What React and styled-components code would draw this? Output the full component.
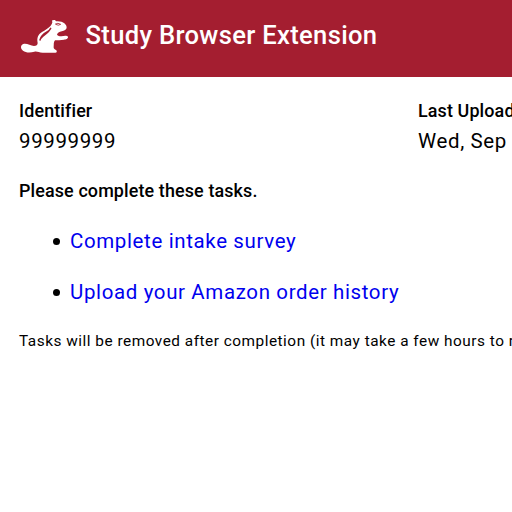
import React from "react";
import styled, { createGlobalStyle } from "styled-components";

const GlobalStyle = createGlobalStyle`
  * { box-sizing: border-box; }
  html, body { margin: 0; background: #fff; overflow: hidden; }
  body { font-family: Roboto, "Liberation Sans", sans-serif; color: #000; }
`;

const Page = styled.div`
  width: 512px;
  height: 512px;
  overflow: hidden;
`;

const AppBar = styled.header`
  display: flex;
  align-items: flex-start;
  height: 77px;
  padding: 10px 0 0 12px;
  gap: 7.5px;
  background: #a41e30;
  color: #fff;
`;

const Logo = styled.svg`
  width: 66px;
  height: 54px;
  flex: none;
`;

const Title = styled.h1`
  margin: 0;
  padding-top: 5px;
  font-size: 25.6px;
  font-weight: 500;
  line-height: 40px;
  letter-spacing: 0.0125em;
  white-space: nowrap;
`;

const Content = styled.main`
  padding: 20px 0 0 19px;
`;

const Summary = styled.section`
  display: grid;
  grid-template-columns: 399px 399px;
`;

const Heading = styled.h2`
  margin: 0;
  font-size: 17.92px;
  font-weight: 500;
  line-height: 28px;
  letter-spacing: 0.0071em;
  white-space: nowrap;
`;

const Value = styled.div`
  padding-top: 1px;
  font-size: 20.48px;
  line-height: 31px;
  letter-spacing: 0.03125em;
  white-space: nowrap;
`;

const Tasks = styled.section`
  padding-top: 20px;
`;

const TaskList = styled.ul`
  display: flex;
  flex-direction: column;
  gap: 20px;
  margin: 21px 0 20px;
  padding: 0 0 0 51px;
  font-size: 20.48px;
  line-height: 31px;
  letter-spacing: 0.03125em;
  list-style: none;
`;

const Task = styled.li`
  display: flex;
  align-items: center;

  &::before {
    content: "";
    width: 7px;
    height: 7px;
    margin: 0 10.5px 0 -17.5px;
    border-radius: 50%;
    background: #000;
  }
`;

const TaskLink = styled.a`
  color: #0000ee;
  text-decoration: none;
  white-space: nowrap;
`;

const Caption = styled.p`
  margin: 0;
  font-size: 15.36px;
  line-height: 26px;
  letter-spacing: 0.0333em;
  white-space: nowrap;
`;

const tasks = ["Complete intake survey", "Upload your Amazon order history"];

function Chipmunk() {
  return (
    <Logo viewBox="0 0 198 162" aria-hidden="true">
      <path
        fill="#fff"
        d="M121 37 C119 31 122 29 125 31 C128 28 131 31 132 34 C142 33 152 35 157 40 C162 45 166 50 163 56 C159 62 151 63 144 65 C139 67 136 70 135 74 C138 77 142 79 148 79 C156 77 165 76 168 80 C169 86 161 88 156 89 C146 91 137 90 129 91 C124 97 126 103 125 110 C124 115 128 118 132 120 C136 123 135 128 130 128 L92 128 C80 128 76 123 67 125 C54 129 41 128 33 122 C25 116 25 105 34 102 C45 99 55 108 66 108 C73 108 77 105 77 99 C74 83 78 74 90 66 C101 59 111 53 116 47 C119 43 120 41 121 37 Z"
      />
      <path
        fill="none"
        stroke="#a41e30"
        strokeWidth="4.5"
        strokeLinecap="round"
        strokeLinejoin="round"
        d="M84 90 C87 77 96 71 105 66 C111 63 114 59 116 55 M88 84 C92 76 104 71 110 64"
      />
      <path
        fill="none"
        stroke="#a41e30"
        strokeWidth="2.5"
        strokeLinecap="round"
        d="M130 42 Q138 37 146 43 Q139 48 133 44"
      />
    </Logo>
  );
}

export default function App() {
  return (
    <Page>
      <GlobalStyle />
      <AppBar>
        <Chipmunk />
        <Title>Study Browser Extension</Title>
      </AppBar>
      <Content>
        <Summary>
          <div>
            <Heading>Identifier</Heading>
            <Value>99999999</Value>
          </div>
          <div>
            <Heading>Last Upload</Heading>
            <Value>Wed, Sep</Value>
          </div>
        </Summary>
        <Tasks>
          <Heading>Please complete these tasks.</Heading>
          <TaskList>
            {tasks.map((task) => (
              <Task key={task}>
                <TaskLink href="#">{task}</TaskLink>
              </Task>
            ))}
          </TaskList>
          <Caption>
            Tasks will be removed after completion (it may take a few hours to register).
          </Caption>
        </Tasks>
      </Content>
    </Page>
  );
}
